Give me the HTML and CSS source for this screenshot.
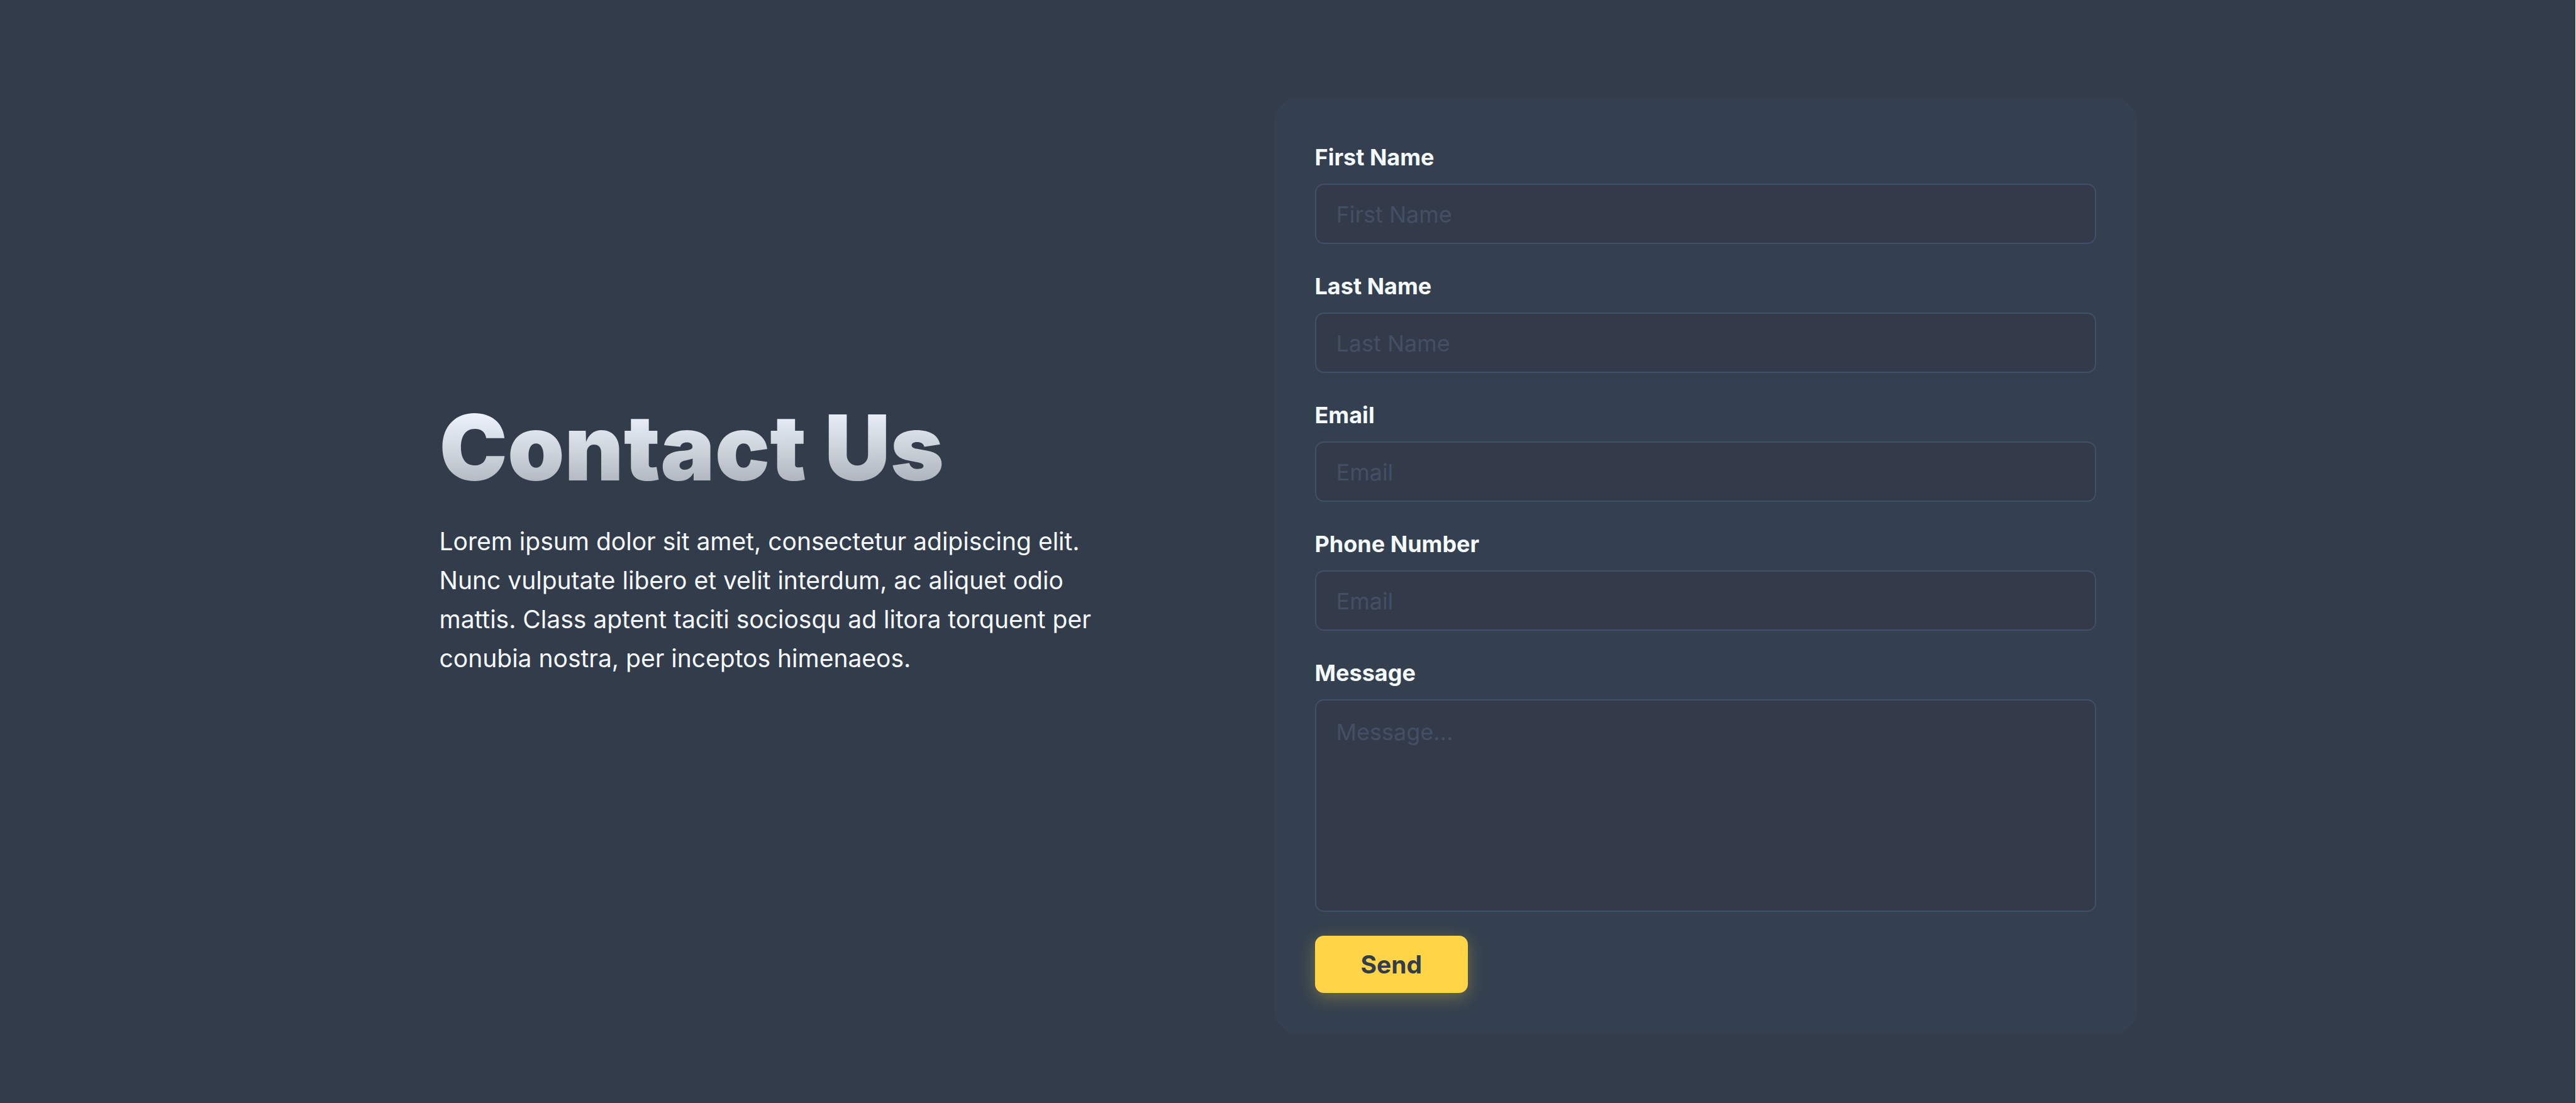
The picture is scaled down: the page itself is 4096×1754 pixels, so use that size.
FILE: index.html
```html
<!DOCTYPE html>
<html lang="en">
<head>
<meta charset="utf-8">
<title>Contact Us</title>
<link rel="stylesheet" href="styles.css">
</head>
<body>
<main class="page">
  <section class="contact">
    <div class="intro">
      <h1 class="intro-title">Contact Us</h1>
      <p class="intro-text">Lorem ipsum dolor sit amet, consectetur adipiscing elit. Nunc vulputate libero et velit interdum, ac aliquet odio mattis. Class aptent taciti sociosqu ad litora torquent per conubia nostra, per inceptos himenaeos.</p>
    </div>
    <form class="card">
      <div class="field">
        <label class="label" for="first-name">First Name</label>
        <input class="control" id="first-name" type="text" placeholder="First Name">
      </div>
      <div class="field">
        <label class="label" for="last-name">Last Name</label>
        <input class="control" id="last-name" type="text" placeholder="Last Name">
      </div>
      <div class="field">
        <label class="label" for="email">Email</label>
        <input class="control" id="email" type="email" placeholder="Email">
      </div>
      <div class="field">
        <label class="label" for="phone">Phone Number</label>
        <input class="control" id="phone" type="tel" placeholder="Email">
      </div>
      <div class="field">
        <label class="label" for="message">Message</label>
        <textarea class="control control-area" id="message" placeholder="Message..."></textarea>
      </div>
      <button class="send" type="button">Send</button>
    </form>
  </section>
</main>
</body>
</html>
```
FILE: styles.css
```css
* {
  box-sizing: border-box;
}

body {
  margin: 0;
  background: #333c4b;
  color: #f5faff;
  font-family: Inter, "Liberation Sans", sans-serif;
}

.page {
  min-height: 100vh;
  padding: 155px 64px 109px 66px;
  border-right: 1px solid #ffffff;
  border-bottom: 1px solid #8b919b;
}

.contact {
  display: grid;
  grid-template-columns: minmax(0, 1fr) minmax(0, 1374px);
  column-gap: 262px;
  align-items: center;
  max-width: 2700px;
  margin: 0 auto;
}

.intro {
  display: flex;
  flex-direction: column;
  gap: 46px;
  padding-bottom: 82px;
}

.intro-title {
  margin: 0;
  align-self: flex-start;
  font-size: 145px;
  line-height: 144px;
  font-weight: 900;
  background: linear-gradient(179deg, #edf2fc 12%, #cdd4dc 52%, #acb2bb 90%);
  -webkit-background-clip: text;
  background-clip: text;
  color: transparent;
}

.intro-text {
  margin: 0;
  font-size: 39px;
  line-height: 62px;
}

.card {
  display: flex;
  flex-direction: column;
  align-items: stretch;
  gap: 38px;
  padding: 66px;
  border-radius: 40px;
  background: #34404f;
}

.field {
  display: flex;
  flex-direction: column;
  gap: 13px;
}

.label {
  font-size: 36px;
  line-height: 58px;
  font-weight: 700;
}

.control {
  display: block;
  width: 100%;
  height: 96px;
  padding: 2px 32px 0;
  border: 2px solid #40506a;
  border-radius: 14px;
  background: #333b4a;
  color: #f5faff;
  font: 400 36px/58px Inter, "Liberation Sans", sans-serif;
}

.control::placeholder {
  color: #434f65;
  opacity: 1;
}

.control-area {
  height: 338px;
  padding: 21px 32px;
  resize: none;
}

.send {
  align-self: flex-start;
  height: 91px;
  padding: 0 73px;
  border: 0;
  border-radius: 14px;
  background: #ffd447;
  color: #333c4b;
  font: 700 39px/62px Inter, "Liberation Sans", sans-serif;
  box-shadow: 0 7px 26px rgba(255, 212, 71, 0.3);
}
```
